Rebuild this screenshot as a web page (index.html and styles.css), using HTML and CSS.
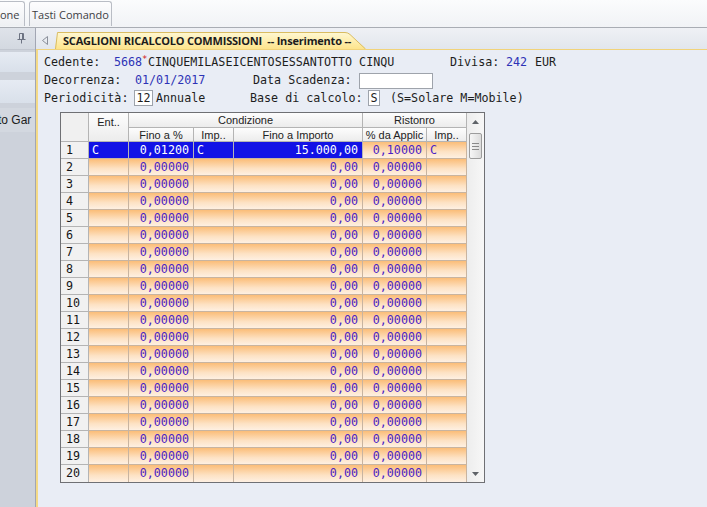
FILE: index.html
```html
<!DOCTYPE html>
<html>
<head>
<meta charset="utf-8">
<link rel="stylesheet" href="styles.css">
</head>
<body>
<div class="app">
  <div class="topbar">
    <div class="rtab rtab-cut">one</div>
    <div class="rtab">Tasti Comando</div>
  </div>
  <div class="main">
    <aside class="sidebar">
      <div class="side-head">
        <svg class="pin" width="9" height="11" viewBox="0 0 9 11"><path d="M2.5 0.5h4v6h-4z M0.5 6.5h8 M4.5 6.5v4" fill="none" stroke="#6d7382" stroke-width="1"/><path d="M5.5 1v5" stroke="#6d7382" stroke-width="1"/></svg>
      </div>
      <div class="side-body">
        <div class="side-item side-item-1"></div>
        <div class="side-item side-item-2"></div>
        <div class="side-text"><span>to Gar</span></div>
      </div>
    </aside>
    <section class="workspace">
      <div class="tabstrip">
        <svg class="scroll-arrow" width="6" height="9" viewBox="0 0 6 9"><path d="M5.5 0.5v8l-5-4z" fill="none" stroke="#8a8f9a" stroke-width="1"/></svg>
        <div class="doc-tab">
          <svg class="doc-tab-bg" width="311" height="17" viewBox="0 0 311 17">
            <defs><linearGradient id="tg" x1="0" y1="0" x2="0" y2="1"><stop offset="0" stop-color="#fff8d2"/><stop offset="1" stop-color="#fde48c"/></linearGradient></defs>
            <path d="M0 17 L2.5 0.5 L290 0.5 Q293 0.5 295 2.5 L311 17 Z" fill="url(#tg)"/>
            <path d="M0.5 17 L2.5 0.5 L290 0.5 Q293 0.5 295 2.5 L310.5 17" fill="none" stroke="#d9bc62" stroke-width="1"/>
          </svg>
          <span class="doc-tab-title">SCAGLIONI RICALCOLO COMMISSIONI  -- Inserimento --</span>
        </div>
      </div>
      <div class="content">
        <div class="form-row">
          <span class="lbl w-ced">Cedente:</span>
          <span class="val blue w-code">5668</span><span class="req">*</span>
          <span class="val w-desc">CINQUEMILASEICENTOSESSANTOTTO CINQU</span>
          <span class="lbl w-div">Divisa:</span>
          <span class="val blue w-cur">242</span>
          <span class="val">EUR</span>
        </div>
        <div class="form-row">
          <span class="lbl w-dec">Decorrenza:</span>
          <span class="val blue w-date">01/01/2017</span>
          <span class="lbl w-scad">Data Scadenza:</span>
          <span class="box box-date"></span>
        </div>
        <div class="form-row">
          <span class="lbl w-per">Periodicità:</span>
          <span class="box box-per">12</span>
          <span class="val w-ann">Annuale</span>
          <span class="lbl w-base">Base di calcolo:</span>
          <span class="box box-base">S</span>
          <span class="val hint">(S=Solare M=Mobile)</span>
        </div>

        <div class="grid">
          <div class="cells">
            <div class="h corner"></div>
            <div class="h ent">Ent..</div>
            <div class="h grp grp-cond">Condizione</div>
            <div class="h grp grp-rist">Ristonro</div>
            <div class="h sub">Fino a %</div>
            <div class="h sub">Imp..</div>
            <div class="h sub">Fino a Importo</div>
            <div class="h sub">% da Applic</div>
            <div class="h sub">Imp..</div>

            <div class="rh">1</div><div class="c sel">C</div><div class="c sel num">0,01200</div><div class="c sel">C</div><div class="c sel num">15.000,00</div><div class="c num">0,10000</div><div class="c">C</div>
            <div class="rh">2</div><div class="c"></div><div class="c num">0,00000</div><div class="c"></div><div class="c num">0,00</div><div class="c num">0,00000</div><div class="c"></div>
            <div class="rh">3</div><div class="c"></div><div class="c num">0,00000</div><div class="c"></div><div class="c num">0,00</div><div class="c num">0,00000</div><div class="c"></div>
            <div class="rh">4</div><div class="c"></div><div class="c num">0,00000</div><div class="c"></div><div class="c num">0,00</div><div class="c num">0,00000</div><div class="c"></div>
            <div class="rh">5</div><div class="c"></div><div class="c num">0,00000</div><div class="c"></div><div class="c num">0,00</div><div class="c num">0,00000</div><div class="c"></div>
            <div class="rh">6</div><div class="c"></div><div class="c num">0,00000</div><div class="c"></div><div class="c num">0,00</div><div class="c num">0,00000</div><div class="c"></div>
            <div class="rh">7</div><div class="c"></div><div class="c num">0,00000</div><div class="c"></div><div class="c num">0,00</div><div class="c num">0,00000</div><div class="c"></div>
            <div class="rh">8</div><div class="c"></div><div class="c num">0,00000</div><div class="c"></div><div class="c num">0,00</div><div class="c num">0,00000</div><div class="c"></div>
            <div class="rh">9</div><div class="c"></div><div class="c num">0,00000</div><div class="c"></div><div class="c num">0,00</div><div class="c num">0,00000</div><div class="c"></div>
            <div class="rh">10</div><div class="c"></div><div class="c num">0,00000</div><div class="c"></div><div class="c num">0,00</div><div class="c num">0,00000</div><div class="c"></div>
            <div class="rh">11</div><div class="c"></div><div class="c num">0,00000</div><div class="c"></div><div class="c num">0,00</div><div class="c num">0,00000</div><div class="c"></div>
            <div class="rh">12</div><div class="c"></div><div class="c num">0,00000</div><div class="c"></div><div class="c num">0,00</div><div class="c num">0,00000</div><div class="c"></div>
            <div class="rh">13</div><div class="c"></div><div class="c num">0,00000</div><div class="c"></div><div class="c num">0,00</div><div class="c num">0,00000</div><div class="c"></div>
            <div class="rh">14</div><div class="c"></div><div class="c num">0,00000</div><div class="c"></div><div class="c num">0,00</div><div class="c num">0,00000</div><div class="c"></div>
            <div class="rh">15</div><div class="c"></div><div class="c num">0,00000</div><div class="c"></div><div class="c num">0,00</div><div class="c num">0,00000</div><div class="c"></div>
            <div class="rh">16</div><div class="c"></div><div class="c num">0,00000</div><div class="c"></div><div class="c num">0,00</div><div class="c num">0,00000</div><div class="c"></div>
            <div class="rh">17</div><div class="c"></div><div class="c num">0,00000</div><div class="c"></div><div class="c num">0,00</div><div class="c num">0,00000</div><div class="c"></div>
            <div class="rh">18</div><div class="c"></div><div class="c num">0,00000</div><div class="c"></div><div class="c num">0,00</div><div class="c num">0,00000</div><div class="c"></div>
            <div class="rh">19</div><div class="c"></div><div class="c num">0,00000</div><div class="c"></div><div class="c num">0,00</div><div class="c num">0,00000</div><div class="c"></div>
            <div class="rh last">20</div><div class="c last"></div><div class="c num last">0,00000</div><div class="c last"></div><div class="c num last">0,00</div><div class="c num last">0,00000</div><div class="c last"></div>
          </div>
          <div class="vscroll">
            <div class="sb-btn"><svg width="7" height="4" viewBox="0 0 7 4"><path d="M0 4L3.5 0L7 4z" fill="#5f6368"/></svg></div>
            <div class="sb-thumb"><span></span><span></span><span></span></div>
            <div class="sb-track"></div>
            <div class="sb-btn"><svg width="7" height="4" viewBox="0 0 7 4"><path d="M0 0L3.5 4L7 0z" fill="#5f6368"/></svg></div>
          </div>
        </div>
      </div>
    </section>
  </div>
</div>
</body>
</html>
```

FILE: styles.css
```css
* { box-sizing: border-box; }
html, body { margin: 0; padding: 0; }
body {
  width: 707px;
  height: 507px;
  overflow: hidden;
  background: #e9edf5;
  font-family: "DejaVu Sans Mono", "Liberation Mono", monospace;
}
.app { width: 707px; height: 507px; display: flex; flex-direction: column; }

/* top ribbon tabs */
.topbar {
  height: 28px;
  flex: none;
  display: flex;
  align-items: flex-end;
  gap: 4px;
  background: linear-gradient(#fbfcfd, #f1f3f6);
  border-bottom: 1px solid #a9adb4;
}
.rtab {
  height: 25px;
  margin-bottom: 1px;
  padding: 0 2px 0 2px;
  display: flex;
  align-items: center;
  font-family: "Open Sans", "Liberation Sans", sans-serif;
  font-size: 11px;
  color: #3d3f44;
  border: 1px solid #b9bdc5;
  border-bottom: none;
  border-radius: 3px 3px 0 0;
  background: linear-gradient(#fdfdfe, #eef0f3);
}
.rtab-cut { margin-left: -4px; padding-left: 3px; width: 29px; }

.main { flex: 1; display: flex; min-height: 0; }

/* left sidebar */
.sidebar {
  width: 36px;
  flex: none;
  display: flex;
  flex-direction: column;
  background: #cdd2db;
  border-right: 1px solid #a2a6b3;
}
.side-head {
  height: 22px;
  flex: none;
  display: flex;
  align-items: center;
  justify-content: flex-end;
  padding-right: 9px;
  background: linear-gradient(#dfe3ea, #d3d8e0);
  border-bottom: 1px solid #c2c7d0;
}
.side-body { flex: 1; display: flex; flex-direction: column; }
.side-item { flex: none; background: linear-gradient(#e6ebf3, #d9e0ea); }
.side-item-1 { margin-top: 2px; height: 20px; }
.side-item-2 { margin-top: 8px; height: 23px; }
.side-text {
  margin-top: 5px;
  height: 24px;
  overflow: hidden;
  white-space: nowrap;
  font-family: "Liberation Sans", sans-serif;
  font-size: 12px;
  line-height: 24px;
  color: #202020;
  background: #d3d8e0;
}
.side-text span { margin-left: -2px; }

/* workspace */
.workspace { flex: 1; display: flex; flex-direction: column; min-width: 0; }
.tabstrip {
  height: 22px;
  flex: none;
  display: flex;
  align-items: flex-end;
  background: linear-gradient(#eff1f5, #e2e6ed);
  border-bottom: 1px solid #f1d37a;
}
.scroll-arrow { margin: 0 0 4px 6px; flex: none; }
.doc-tab {
  position: relative;
  width: 311px;
  height: 17px;
  margin-left: 7px;
  flex: none;
  display: flex;
  align-items: center;
  padding-left: 8px;
}
.doc-tab-bg { position: absolute; left: 0; top: 0; }
.doc-tab-title {
  position: relative;
  font-family: "Open Sans", "Liberation Sans", sans-serif;
  font-weight: 700;
  font-size: 11px;
  letter-spacing: -0.2px;
  color: #1c1c1c;
  white-space: pre;
}

.content {
  flex: 1;
  padding: 3px 0 0 6px;
  border-left: 2px solid #f4da86;
  font-size: 11.7px;
  color: #1d1d1d;
}
.form-row { height: 18px; display: flex; align-items: center; white-space: pre; }
.lbl, .val { flex: none; }
.blue { color: #2d33b6; }
.req { color: #d01818; font-size: 9px; align-self: flex-start; margin-top: 1px; width: 6px; }
.w-ced { width: 70px; }
.w-code { width: 28px; }
.w-desc { width: 302px; }
.w-div { width: 56px; }
.w-cur { width: 29px; }
.w-dec { width: 91px; }
.w-date { width: 118px; }
.w-scad { width: 106px; }
.w-per { width: 90px; }
.w-ann { width: 97px; padding-left: 3px; }
.w-base { width: 118px; }
.hint { margin-left: 10px; }
.box {
  flex: none;
  height: 16px;
  background: #fff;
  border: 1px solid #9ea3ab;
  display: flex;
  align-items: center;
  justify-content: center;
}
.box-date { width: 74px; height: 16px; margin-top: 1px; }
.box-per { width: 19px; }
.box-base { width: 12px; }

/* grid */
.grid {
  margin: 5px 0 0 16px;
  width: 425px;
  display: flex;
  border: 1px solid #6f7074;
}
.cells {
  display: grid;
  grid-template-columns: 28px 40px 65px 40px 129px 64px 40px;
  grid-template-rows: 15px 14px repeat(20, 17px);
}
.h {
  font-family: "Liberation Sans", Arial, sans-serif;
  font-size: 11px;
  color: #222;
  background: linear-gradient(#fdfdfd, #ececec);
  border-right: 1px solid #b4b4b4;
  border-bottom: 1px solid #b4b4b4;
  display: flex;
  justify-content: center;
  align-items: center;
  white-space: nowrap;
}
.corner { grid-row: 1 / 3; grid-column: 1; background: #f0f0f0; }
.ent { grid-row: 1 / 3; grid-column: 2; align-items: flex-start; padding-top: 3px; }
.grp-cond { grid-column: 3 / 6; }
.grp-rist { grid-column: 6 / 8; }
.rh {
  background: #f1f1f1;
  border-right: 1px solid #b4b4b4;
  border-bottom: 1px solid #b4b4b4;
  color: #151515;
  padding-left: 5px;
  line-height: 16px;
}
.c {
  background: linear-gradient(#fbbd78, #fde2c4 60%, #fef0e2);
  border-right: 1px solid #c8b4a0;
  border-bottom: 1px solid #c8b4a0;
  color: #4a22c6;
  padding: 0 3px;
  line-height: 16px;
  white-space: nowrap;
}
.num { text-align: right; padding-right: 4px; }
.sel { background: #1212e6; color: #fff; border-right-color: #b4b4b4; }
.last { border-bottom: none; }

.vscroll {
  width: 17px;
  display: flex;
  flex-direction: column;
  background: linear-gradient(90deg, #ededed, #f7f7f7);
}
.sb-btn { height: 17px; display: flex; align-items: center; justify-content: center; flex: none; }
.sb-thumb {
  flex: none;
  height: 26px;
  margin: 3px 2px 0 2px;
  border: 1px solid #9c9c9c;
  border-radius: 2px;
  background: linear-gradient(90deg, #f6f6f6, #dcdcdc);
  display: flex;
  flex-direction: column;
  align-items: center;
  justify-content: center;
  gap: 2px;
}
.sb-thumb span { width: 7px; height: 1px; background: #8a8a8a; }
.sb-track { flex: 1; }
```
